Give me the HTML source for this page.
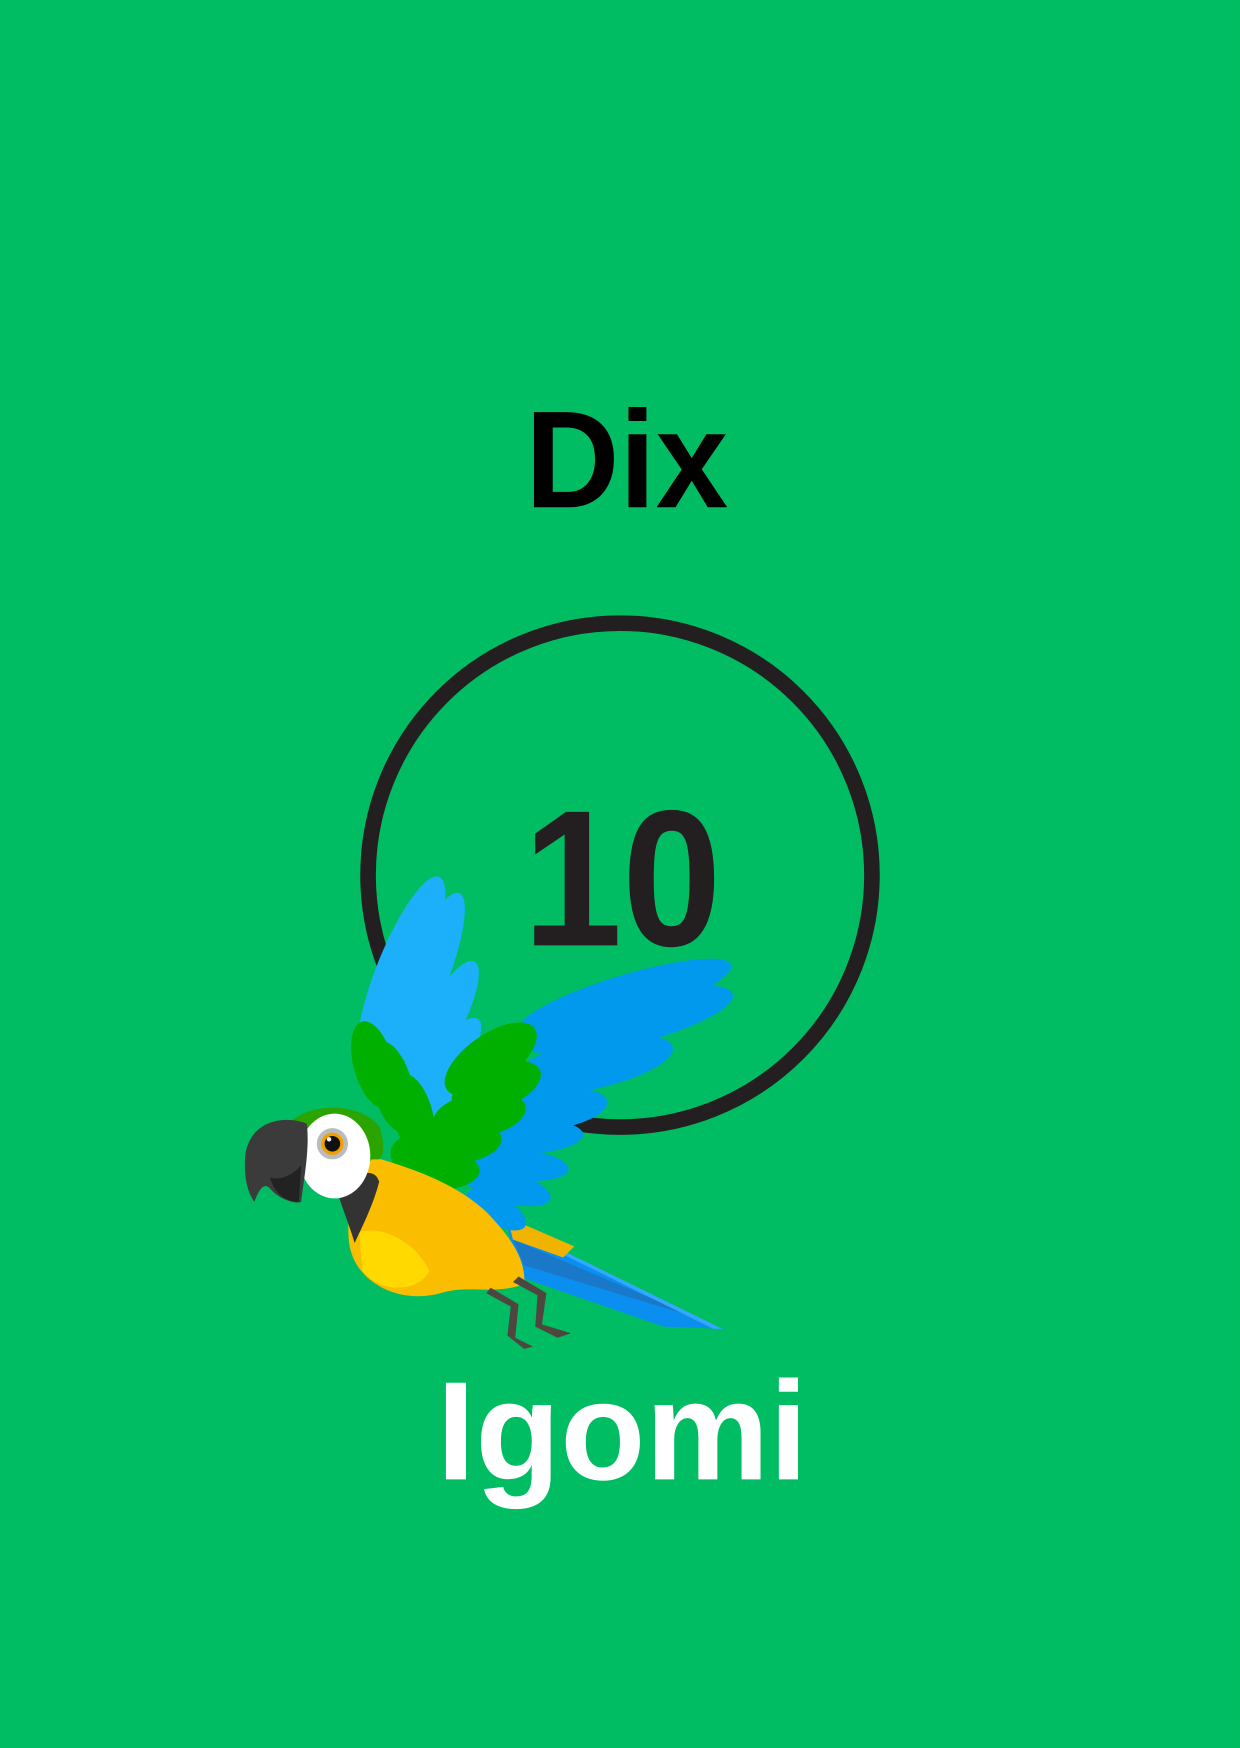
<!DOCTYPE html>
<html><head><meta charset="utf-8"><style>
html,body{margin:0;padding:0;background:#00bd63;}
svg{display:block}
</style></head><body>
<svg width="1240" height="1748" viewBox="0 0 1112 1568" xmlns="http://www.w3.org/2000/svg">
<rect width="1112" height="1568" fill="#00bd63"/>
<text x="562" y="455" text-anchor="middle" font-family="Liberation Sans, sans-serif" font-weight="bold" font-size="124" fill="#000" textLength="182" lengthAdjust="spacingAndGlyphs">Dix</text>
<circle cx="556" cy="785" r="226" fill="none" stroke="#231f20" stroke-width="14"/>
<text x="558" y="848" text-anchor="middle" font-family="Liberation Sans, sans-serif" font-weight="bold" font-size="174" fill="#231f20" textLength="178" lengthAdjust="spacingAndGlyphs">10</text>
<text x="558" y="1327" text-anchor="middle" font-family="Liberation Sans, sans-serif" font-weight="bold" font-size="126" fill="#fff" textLength="333" lengthAdjust="spacingAndGlyphs">Igomi</text>

<g>
 <path d="M455 1100 L648 1192 L595 1190 L465 1145 Z" fill="#0a8ff0"/>
 <path d="M460 1112 L625 1182 L470 1135 Z" fill="#1a78c8"/>
 <path d="M460 1100 L648 1192 L640 1192 L462 1104 Z" fill="#33a8ff"/>
 <path d="M455 1092 L515 1118 L505 1128 L460 1112 Z" fill="#f0b400"/>
 <g fill="#0099ee">
  <ellipse cx="560" cy="895" rx="100" ry="20" transform="rotate(-17 560 895)"/>
  <ellipse cx="565" cy="915" rx="95" ry="22" transform="rotate(-14 565 915)"/>
  <ellipse cx="530" cy="955" rx="75" ry="22" transform="rotate(-12 530 955)"/>
  <ellipse cx="495" cy="995" rx="50" ry="18" transform="rotate(-8 495 995)"/>
  <ellipse cx="475" cy="1020" rx="48" ry="15" transform="rotate(-3 475 1020)"/>
  <ellipse cx="465" cy="1045" rx="45" ry="14" transform="rotate(5 465 1045)"/>
  <ellipse cx="455" cy="1065" rx="40" ry="14" transform="rotate(15 455 1065)"/>
  <ellipse cx="445" cy="1085" rx="30" ry="13" transform="rotate(30 445 1085)"/>
 </g>
 <g fill="#1cb0fb">
  <ellipse cx="360" cy="870" rx="22" ry="90" transform="rotate(22 360 870)"/>
  <ellipse cx="380" cy="880" rx="20" ry="85" transform="rotate(22 380 880)"/>
  <ellipse cx="395" cy="920" rx="18" ry="65" transform="rotate(28 395 920)"/>
  <ellipse cx="400" cy="955" rx="16" ry="50" transform="rotate(35 400 955)"/>
  <ellipse cx="410" cy="975" rx="14" ry="40" transform="rotate(40 410 975)"/>
 </g>
 <g fill="#00b000">
  <ellipse cx="335" cy="955" rx="18" ry="40" transform="rotate(-15 335 955)"/>
  <ellipse cx="352" cy="975" rx="18" ry="42" transform="rotate(-15 352 975)"/>
  <ellipse cx="370" cy="1000" rx="18" ry="38" transform="rotate(-15 370 1000)"/>
  <ellipse cx="440" cy="950" rx="48" ry="22" transform="rotate(-35 440 950)"/>
  <ellipse cx="445" cy="975" rx="42" ry="20" transform="rotate(-20 445 975)"/>
  <ellipse cx="430" cy="1000" rx="42" ry="20" transform="rotate(-10 430 1000)"/>
  <ellipse cx="405" cy="1025" rx="45" ry="20" transform="rotate(-5 405 1025)"/>
  <ellipse cx="390" cy="1050" rx="40" ry="18"/>
  <ellipse cx="380" cy="1035" rx="30" ry="20"/>
 </g>
 <path d="M335 1038 C370 1048 410 1062 437 1088 C458 1110 472 1130 470 1152 C442 1162 420 1152 395 1160 C360 1170 318 1152 313 1115 C310 1090 316 1060 335 1038 Z" fill="#fbbd00"/>
 <path d="M322 1105 C340 1100 370 1110 385 1140 C375 1160 340 1160 325 1140 Z" fill="#ffd900"/>
 <path d="M300 1060 C320 1055 335 1045 340 1060 C335 1080 325 1100 318 1115 C312 1095 305 1080 300 1060 Z" fill="#333"/>
 <path d="M262 1005 C280 990 320 988 340 1010 C345 1025 345 1035 340 1040 L300 1040 Z" fill="#2ca400"/>
 <ellipse cx="300" cy="1037" rx="32" ry="38" fill="#fff"/>
 <circle cx="298" cy="1026" r="14" fill="#bbb"/>
 <circle cx="298" cy="1026" r="10" fill="#f0a000"/>
 <circle cx="298" cy="1026" r="7" fill="#111"/>
 <circle cx="295" cy="1022" r="2" fill="#fff"/>
 <path d="M275 1008 C255 1000 225 1005 220 1035 C218 1055 222 1070 228 1078 C232 1068 236 1060 242 1066 C252 1078 268 1080 270 1078 C272 1060 278 1030 275 1008 Z" fill="#3b3b3b"/>
 <path d="M242 1056 C252 1060 265 1052 270 1045 L268 1078 C255 1078 246 1070 242 1056 Z" fill="#222"/>
 <path d="M440 1155 L465 1170 L462 1200 L478 1208 L470 1210 L455 1198 L458 1172 L436 1160 Z" fill="#4f463f"/>
 <path d="M465 1145 L490 1160 L486 1188 L512 1196 L500 1200 L480 1190 L482 1162 L460 1150 Z" fill="#4f463f"/>
</g>
</svg>
</body></html>
